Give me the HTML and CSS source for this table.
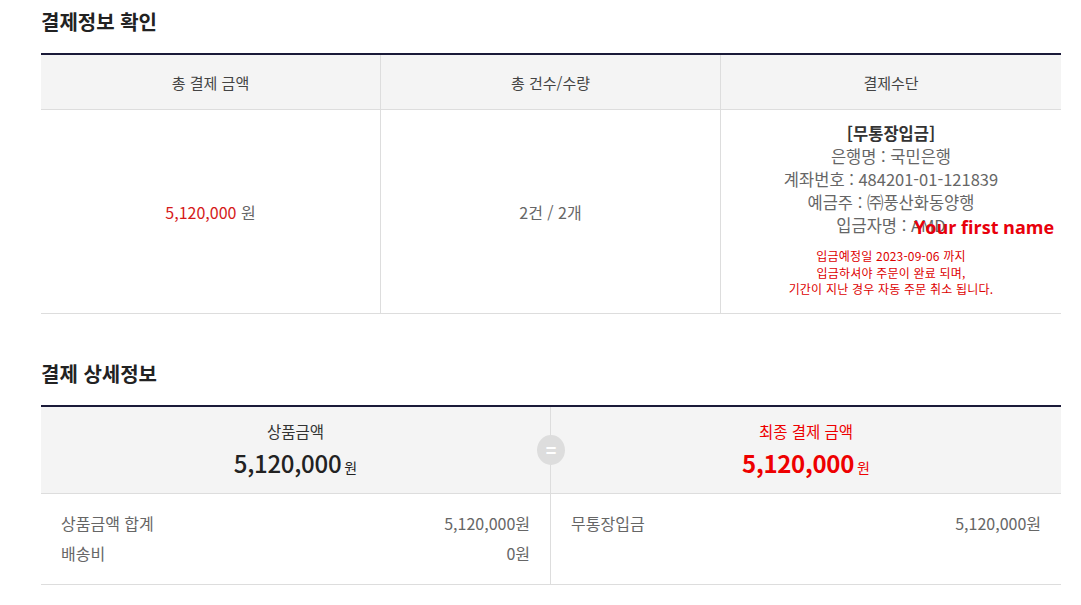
FILE: index.html
```html
<!DOCTYPE html>
<html lang="ko">
<head>
<meta charset="utf-8">
<title>결제정보 확인</title>
<link rel="stylesheet" href="styles.css">
</head>
<body>
<div class="page">
  <h2 class="sec-title first">결제정보 확인</h2>
  <div class="info-table">
    <div class="th">총 결제 금액</div>
    <div class="th">총 건수/수량</div>
    <div class="th">결제수단</div>
    <div class="td"><span class="red">5,120,000</span>&nbsp;원</div>
    <div class="td">2건 / 2개</div>
    <div class="td pay">
      <div class="pay-lines">
        <p class="pay-type">[무통장입금]</p>
        <p>은행명 : 국민은행</p>
        <p>계좌번호 : 484201-01-121839</p>
        <p>예금주 : ㈜풍산화동양행</p>
        <p>입금자명 : AMD</p>
      </div>
      <div class="pay-note">
        <p>입금예정일 2023-09-06 까지</p>
        <p>입금하셔야 주문이 완료 되며,</p>
        <p>기간이 지난 경우 자동 주문 취소 됩니다.</p>
      </div>
      <span class="overlay-name">Your first name</span>
    </div>
  </div>

  <h2 class="sec-title">결제 상세정보</h2>
  <div class="detail-table">
    <div class="dh">
      <p class="dh-label">상품금액</p>
      <p class="dh-amount"><strong>5,120,000</strong><span class="won">원</span></p>
    </div>
    <div class="dh final">
      <p class="dh-label">최종 결제 금액</p>
      <p class="dh-amount"><strong>5,120,000</strong><span class="won">원</span></p>
      <span class="eq">=</span>
    </div>
    <div class="dd">
      <div class="row"><span>상품금액 합계</span><span>5,120,000원</span></div>
      <div class="row"><span>배송비</span><span>0원</span></div>
    </div>
    <div class="dd">
      <div class="row"><span>무통장입금</span><span>5,120,000원</span></div>
    </div>
  </div>
</div>
</body>
</html>
```
FILE: styles.css
```css
* { box-sizing: border-box; }
html, body { margin: 0; padding: 0; background: #fff; }
body {
  font-family: "Noto Sans CJK KR", "Noto Sans", sans-serif;
  color: #333;
}
p { margin: 0; }
.page { padding: 0 20px 0 41px; }

.sec-title {
  margin: 45px 0 16px;
  font-size: 20px;
  line-height: 30px;
  font-weight: 700;
  color: #222;
}
.sec-title.first { margin-top: 7px; }

.info-table {
  display: grid;
  grid-template-columns: 339px 340px 341px;
  border-top: 2px solid #1a1a38;
  border-bottom: 1px solid #ddd;
}
.th {
  height: 55px;
  background: #f4f4f4;
  border-bottom: 1px solid #ddd;
  display: flex;
  align-items: center;
  justify-content: center;
  font-size: 15px;
  color: #444;
}
.th + .th, .td + .td { border-left: 1px solid #ddd; }
.td {
  display: flex;
  align-items: center;
  justify-content: center;
  font-size: 16px;
  color: #666;
  min-height: 203px;
}
.red { color: #d51a1a; }
.td.pay {
  position: relative;
  flex-direction: column;
  padding: 11px 0 14px;
}
.pay-lines { text-align: center; font-size: 16.5px; line-height: 23px; color: #666; }
.pay-type { font-weight: 700; color: #333; }
.pay-note {
  margin-top: 11px;
  text-align: center;
  font-size: 12px;
  line-height: 16.5px;
  color: #d00;
  letter-spacing: 0.2px;
}
.overlay-name {
  position: absolute;
  left: 193px;
  top: 105px;
  font-family: "Open Sans", "Noto Sans", sans-serif;
  font-weight: 700;
  font-size: 18px;
  line-height: 24px;
  color: #e8000b;
}

.detail-table {
  display: grid;
  grid-template-columns: 509px 511px;
  border-top: 2px solid #1a1a38;
  border-bottom: 1px solid #ddd;
}
.dh {
  position: relative;
  height: 87px;
  background: #f4f4f4;
  border-bottom: 1px solid #ddd;
  text-align: center;
  padding-top: 13px;
}
.dh.final, .dd + .dd { border-left: 1px solid #ddd; }
.dh-label { font-size: 15.5px; line-height: 22px; color: #333; }
.dh-amount { margin-top: 4px; line-height: 34px; color: #222; }
.dh-amount strong { font-size: 24px; font-weight: 500; letter-spacing: -0.3px; }
.won { font-size: 14px; margin-left: 3px; }
.final .dh-label, .final .dh-amount { color: #e00; }
.final .dh-amount strong { font-weight: 700; }
.eq {
  position: absolute;
  left: -14px;
  top: 28px;
  width: 28px;
  height: 30px;
  border-radius: 50%;
  background: #ddd;
  color: #fff;
  font-size: 18px;
  font-weight: 700;
  line-height: 28px;
  text-align: center;
}
.dd { padding: 14px 20px 16px; min-height: 90px; }
.row {
  display: flex;
  justify-content: space-between;
  font-size: 16px;
  line-height: 30px;
  color: #666;
}
```
